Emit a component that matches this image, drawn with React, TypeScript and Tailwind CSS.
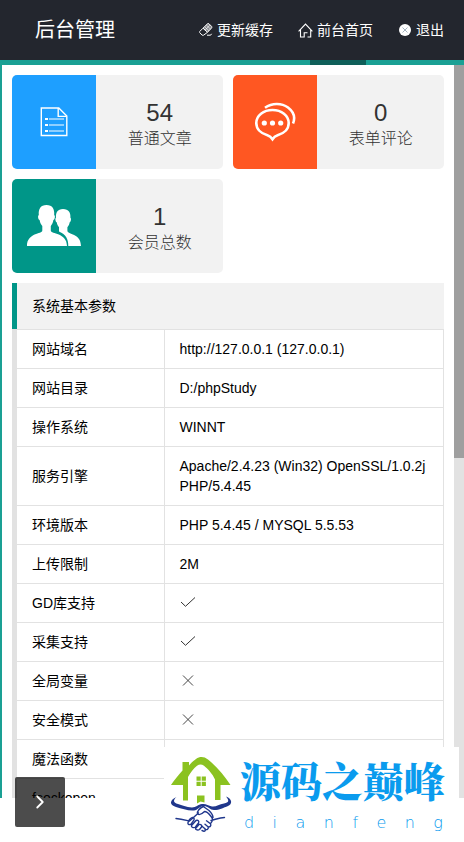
import { ChevronRight } from "lucide-react";
import type { ReactNode } from "react";

const EraserIcon = () => (
  <svg width="14" height="14" viewBox="0 0 14 14" fill="none" stroke="currentColor">
    <path d="M8.500.8c.5-.4 1-.4 1.500 0l2.600 2.600c.4.5.4 1 0 1.500L8.500 9.300 4 5.200Z" fill="#85878d" />
    <path d="M4 5.200.9 8.300c-.5.500-.5 1 0 1.500l2.200 2.400h1.400l4-2.900M8 12.200h3.600l1-1.400" />
    <path d="m6 4 4 3.800M7.500 2.300l4 3.800M6 7.200l4.800-5" strokeWidth="0.6" />
  </svg>
);

const HomeIcon = () => (
  <svg width="15" height="15" viewBox="0 0 15 15" fill="none" stroke="currentColor">
    <path d="M.6 8.400 7.500 1l6.900 7.400M2.500 6.800v7.200h3.700V9.800h3.300M9.500 14h3.200V6.800" strokeWidth="1.100" />
  </svg>
);

const ExitIcon = () => (
  <svg width="14" height="14" viewBox="0 0 14 14">
    <circle cx="7" cy="7" r="6" fill="#fff" />
    <path d="m4.500 4.500 5 5m0-5-5 5" stroke="#a5b4c0" fill="none" />
  </svg>
);

const ArticleIcon = () => (
  <svg width="28" height="30" viewBox="0 0 28 30" fill="none" stroke="#fff">
    <path d="M1.300 1h17.500l8 8v19.500H1.300Z" strokeWidth="1.400" />
    <path d="M18.200 1v8.400h8.400" strokeWidth="1.400" />
    <path d="M9 12h15M9 18h15M9 24h15" strokeWidth="1" />
    <path d="M5 12h3M5 18h3M5 24h3" strokeWidth="2.200" />
  </svg>
);

const CommentIcon = () => (
  <svg width="42" height="40" viewBox="0 0 42 40" fill="none" stroke="#fff">
    <path
      d="M18.500 8c9 0 16.200 5.500 16.200 13 0 6-4.500 10.500-11.100 12.300-2 .6-3.700 1.700-5.100 3.900-1.400-2.200-3.100-3.300-5.100-3.900C6.800 31.500 2.300 27 2.300 21c0-7.500 7.200-13 16.200-13Z"
      strokeWidth="2.600"
    />
    <path d="M11 5.700C18 .8 27.500.700 34 5.500c5.500 4.200 7.600 9.700 5 16" strokeWidth="2.600" />
    <g fill="#fff" stroke="none">
      <circle cx="10.300" cy="21" r="2.600" />
      <circle cx="18.500" cy="21" r="2.600" />
      <circle cx="26.700" cy="21" r="2.600" />
    </g>
  </svg>
);

const MembersIcon = () => (
  <svg width="56" height="42" viewBox="0 0 56 42" fill="#fff">
    <path d="M37 4c5.700 0 7.800 3.600 7.400 8.700 1.100.6.600 4-.7 4.500-.5 2.400-1.300 3.900-2.300 5v3.600c0 4 13.600 2.200 13.600 15.200H42.300c0-7-2.300-11.500-9.300-14.500v-4.300c-1-1.100-1.800-2.600-2.300-5-1.300-.5-1.800-3.900-.7-4.500C29.600 7.600 31.500 4 37 4Z" />
    <path d="M20.500 0c6 0 8.200 4 7.700 10 1.300.7.700 4.600-.8 5.100-.5 2.700-1.400 4.600-2.600 5.900v4.500c0 3.800 16.200 2 16.200 15.500H1c0-13.500 15.300-11.700 15.300-15.500V21c-1.300-1.300-2.200-3.200-2.700-5.900-1.500-.5-2.100-4.400-.8-5.100-.5-6 1.700-10 7.700-10Z" />
  </svg>
);

const CheckMark = () => (
  <svg width="16" height="16" viewBox="0 0 16 16" fill="none" stroke="#333" role="img" aria-label="支持">
    <path d="m1 7 4.500 4.300L15 2.500" />
  </svg>
);

const CrossMark = () => (
  <svg width="16" height="16" viewBox="0 0 16 16" fill="none" stroke="#333" role="img" aria-label="不支持">
    <path d="m3 2.500 10 10M13 2.500l-10 10" strokeWidth="0.900" />
  </svg>
);

const HouseLogo = () => (
  <svg width="70" height="84" viewBox="0 0 70 84" fill="none">
    <path
      d="M16.500 11h6.500v3.500c3-3.500 5-5 7-6.500 4-2.800 8-2.500 12 .5 9 7 17 17 22.500 25.500H54.500v15H49V28.500C46.500 23 41.500 17.500 38 14.800c-2.500-1.600-4.500-1.600-7 0-3.500 2.700-6.500 6.700-9 11.200v23.500h-5V34H5c3-4.500 7-9.500 11.500-14.500Z"
      fill="#8bc220"
    />
    <path d="M30.500 25.500h4.200v4.200h-4.200Zm5.200 0h4.200v4.200h-4.200Zm-5.200 5.200h4.200v4.200h-4.200Zm5.200 0h4.200v4.200h-4.200ZM31 44.500h7.500v7l-4-1-3.500 2Z" fill="#8bc220" />
    <path
      d="M10.500 46C3.500 49 3 54 10 56c6 1.700 12 4 18 3.500 4-.3 5-4 10-4.500 4 0 6 4 10 4 6 0 9-2.200 13-3.500 6-2 5.500-7.500-1-10 3.500 4 3 6-2 7-5 1-8 3.500-12 3-4-1-6-3-10-2.500-4 .5-6 3.500-10 3.500-6-.5-10-2.500-14-3.500-5-1.200-5-4-1.500-7Z"
      fill="#20378c"
    />
    <g stroke="#20378c" strokeWidth="1.400" strokeLinecap="round" strokeLinejoin="round">
      <path d="M10 67.500c5 .5 9 1.500 13.500 2.500l9-8M58.500 66.500c-5 0-9 2-13.500 3M38 55c-4 2-7 5-6.500 8 2 1.500 5-.5 7-2.500 3 0 5 3 7 5.500 1.500 2 1.500 4-1 6.500M38 56l5 3.500c2 2 4 4 4 7" />
      <path d="M22 71.500c1-2.500 2.500-4.500 4.500-5 2 .3 2 2 1 3.200l-2.500 3.500c-2 1-3.500.3-3-1.700ZM25.500 74.500l4.500-5c2-.8 3.500.5 2.500 2.500l-3 4c-2 1.200-4.500.5-4-1.500ZM29.500 77.500l3.500-4c2-.5 3.300.8 2.500 2.500l-2 2.500c-1.500 1-4 .5-4-1Z" />
      <path d="m36 79.500 2 .8c1.500-.3 2-1.500 1-2.500l-3-2.500m3 3c2 1 4-.5 3-2.500l-3-2.500m3 2.500c2 .5 3.500-1 2.500-3l-4-3" />
    </g>
  </svg>
);

const navItems = [
  { label: "更新缓存", icon: <EraserIcon /> },
  { label: "前台首页", icon: <HomeIcon /> },
  { label: "退出", icon: <ExitIcon /> },
];

const stats = [
  { label: "普通文章", value: 54, color: "bg-[#1e9fff]", icon: <ArticleIcon /> },
  { label: "表单评论", value: 0, color: "bg-[#ff5722]", icon: <CommentIcon /> },
  { label: "会员总数", value: 1, color: "bg-[#009688]", icon: <MembersIcon /> },
];

const params: { name: string; value: ReactNode }[] = [
  { name: "网站域名", value: "http://127.0.0.1 (127.0.0.1)" },
  { name: "网站目录", value: "D:/phpStudy" },
  { name: "操作系统", value: "WINNT" },
  { name: "服务引擎", value: "Apache/2.4.23 (Win32) OpenSSL/1.0.2j PHP/5.4.45" },
  { name: "环境版本", value: "PHP 5.4.45 / MYSQL 5.5.53" },
  { name: "上传限制", value: "2M" },
  { name: "GD库支持", value: <CheckMark /> },
  { name: "采集支持", value: <CheckMark /> },
  { name: "全局变量", value: <CrossMark /> },
  { name: "安全模式", value: <CrossMark /> },
  { name: "魔法函数", value: <CrossMark /> },
  { name: "fsockopen", value: <CheckMark /> },
];

const Header = () => (
  <header className="shrink-0">
    <div className="flex h-[60px] items-center justify-between bg-[#23262e] pr-5 pl-[35px] text-white">
      <h1 className="text-xl">后台管理</h1>
      <nav className="flex gap-[25px]">
        {navItems.map((item) => (
          <a key={item.label} href="#" className="flex items-center gap-1 text-sm">
            {item.icon}
            {item.label}
          </a>
        ))}
      </nav>
    </div>
    <div className="flex h-[5px] justify-end bg-[#1aa094] pr-[98px]">
      <div className="w-14 bg-[#0f5f59]" />
    </div>
  </header>
);

const App = () => {
  return (
    <div className="relative flex h-screen flex-col overflow-hidden bg-white font-['Liberation_Sans','Noto_Sans_CJK_SC',sans-serif] text-black">
      <Header />

      <div className="flex min-h-0 flex-1 border-l-2 border-[#1aa094]">
        <main className="min-w-0 flex-1 overflow-hidden p-[10px]">
          <section className="grid grid-cols-2 gap-[10px]">
            {stats.map((stat) => (
              <a
                key={stat.label}
                href="#"
                className="flex h-[94px] overflow-hidden rounded-[5px] bg-[#f2f2f2] text-[#333]"
              >
                <div className={`flex w-2/5 items-center justify-center ${stat.color}`}>
                  {stat.icon}
                </div>
                <div className="flex flex-1 flex-col items-center justify-center pt-[6px]">
                  <span className="text-2xl leading-7">{stat.value}</span>
                  <span className="text-base leading-6 font-light">{stat.label}</span>
                </div>
              </a>
            ))}
          </section>

          <section className="mt-[10px]">
            <h2 className="border-l-[5px] border-[#009688] bg-[#f2f2f2] px-[15px] py-[13px] text-sm">
              系统基本参数
            </h2>
            <div className="border-l-[5px] border-[#e2e2e2]">
              <table className="w-full table-fixed border-collapse text-sm">
                <colgroup>
                  <col className="w-[147px]" />
                  <col />
                </colgroup>
                <tbody>
                  {params.map((param) => (
                    <tr key={param.name} className="border-y border-[#e2e2e2]">
                      <th
                        scope="row"
                        className="border-r border-[#e2e2e2] px-[15px] py-[9px] text-left font-normal"
                      >
                        {param.name}
                      </th>
                      <td className="border-r border-[#e2e2e2] px-[15px] py-[9px]">
                        {param.value}
                      </td>
                    </tr>
                  ))}
                </tbody>
              </table>
            </div>
          </section>
        </main>

        <div className="flex w-[10px] shrink-0 flex-col bg-[#e2e2e2]">
          <div className="h-[calc(54%-3px)] bg-[#9f9f9f]" />
        </div>
      </div>

      <footer className="h-11 shrink-0 bg-white" />

      <button
        type="button"
        aria-label="展开菜单"
        className="absolute bottom-[15px] left-[15px] flex size-[50px] items-center justify-center rounded-[2px] bg-black/70 text-white"
      >
        <ChevronRight size={22} />
      </button>

      <div className="absolute right-[5px] bottom-0 flex h-[95px] w-[295px] gap-1 bg-white pt-1 pr-3 pl-[2px] text-[#0a9bee]">
        <HouseLogo />
        <div className="flex-1 pt-1">
          <p className="text-[41px] leading-[50px] font-black whitespace-nowrap font-['Noto_Serif_CJK_SC','Noto_Sans_CJK_SC',serif]">
            源码之巅峰
          </p>
          <p className="mt-[6px] flex justify-between px-1 font-['DejaVu_Sans',sans-serif] text-base leading-6 font-extralight">
            {"dianfeng".split("").map((letter, i) => (
              <span key={i}>{letter}</span>
            ))}
          </p>
        </div>
      </div>
    </div>
  );
};

export default App;
